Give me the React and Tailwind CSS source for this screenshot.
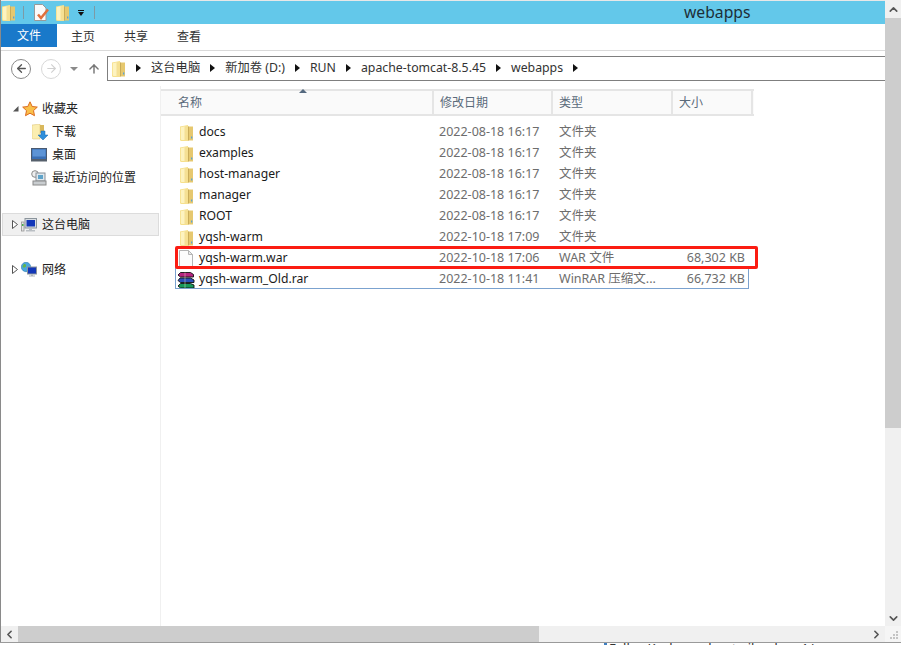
import React from 'react';
import { ArrowLeft, ArrowRight, ArrowUp, ChevronUp, ChevronDown, ChevronLeft, ChevronRight } from 'lucide-react';

const FONT = '"Noto Sans", "Noto Sans CJK SC", sans-serif';

// open manila folder, same drawing at every size
const Folder = ({ w = 13, h = 16 }) => (
  <svg width={w} height={h} viewBox="0 0 13 16" className="shrink-0">
    <path d="M0 1.500 8 0v16H1.500Q0 16 0 14.500z" fill="#f6e08c" />
    <path d="M.8 2.200 6 1v14H1.800Q.8 15 .8 14z" fill="#fdf3c0" />
    <path d="M4.500 1.300 7.500.8V15.500H4.500z" fill="#f5e094" />
    <path d="M8 1.500h5V15.500H8z" fill="#e6c86f" />
    <path d="M8 1.500h.8V15.500H8z" fill="#c2a555" />
    <path d="M11 11.500h1.300v2H11z" fill="#5aa3d8" />
  </svg>
);

const PlainFile = () => (
  <svg width="14" height="17" viewBox="0 0 14 17" className="shrink-0">
    <path d="M.5.500h9l4 4v12H.5z" fill="#fcfcfc" stroke="#b5b5b5" />
    <path d="M9.500.500v4h4z" fill="#eaeaea" stroke="#b5b5b5" />
  </svg>
);

const RarIcon = () => (
  <svg width="18" height="18" viewBox="0 0 18 18" className="shrink-0">
    <path d="M3.500 1.500h10L16.500 3.500v2.500h-13L1 4z" fill="#b5237f" stroke="#111" strokeWidth="0.900" />
    <path d="M3 7h10.500L17 9v2.500H3.500L1 9.500z" fill="#2a4fb8" stroke="#111" strokeWidth="0.900" />
    <path d="M3.500 12.500h10L17 14v3H3.500L1 15z" fill="#17985a" stroke="#111" strokeWidth="0.900" />
    <path d="M8 1.500v15.500" stroke="#e9e2c0" strokeWidth="0.800" opacity="0.600" />
  </svg>
);

const Star = () => (
  <svg width="16" height="16" viewBox="0 0 16 16" className="shrink-0">
    <path d="M8 .8l2.200 4.700 5.100.6-3.800 3.500 1 5.100L8 12.200l-4.500 2.500 1-5.100L.7 6.100l5.100-.6z" fill="#f9c04a" stroke="#dd6a1f" strokeWidth="1" />
  </svg>
);

const DownloadFolder = () => (
  <svg width="16" height="16" viewBox="0 0 16 16" className="shrink-0">
    <path d="M0 1 8 0v15H1.500Q0 15 0 13.500z" fill="#fbeeb0" stroke="#d8bf73" strokeWidth="0.500" />
    <path d="M8 1h4v8H8z" fill="#d9b85c" />
    <path d="M9 7h4v4h3l-5 5-5-5h3z" fill="#2f8fdc" stroke="#1b6bb0" strokeWidth="0.500" />
  </svg>
);

const Desktop = () => (
  <svg width="16" height="14" viewBox="0 0 16 14" className="shrink-0">
    <rect x="0.500" y="0.500" width="15" height="11" fill="#3a6fb5" stroke="#4a5a70" />
    <rect x="1.500" y="1.500" width="13" height="7" fill="#5d94d6" />
    <rect x="0" y="11" width="16" height="2.500" fill="#56606c" />
  </svg>
);

const Recent = () => (
  <svg width="16" height="16" viewBox="0 0 16 16" className="shrink-0">
    <circle cx="4" cy="4" r="3.300" fill="#eee" stroke="#8a8a8a" />
    <rect x="5" y="3" width="9" height="8" fill="#dfe8ee" stroke="#8a9097" />
    <rect x="7" y="5" width="5" height="4" fill="#5fa3c9" />
    <rect x="2" y="11" width="13" height="4" fill="#c9cdd0" stroke="#8a8a8a" />
  </svg>
);

const Computer = () => (
  <svg width="16" height="14" viewBox="0 0 16 14" className="shrink-0">
    <rect x="0.500" y="4" width="2.500" height="9" fill="#e7e7e7" stroke="#8b8b8b" strokeWidth="0.700" />
    <rect x="1" y="6" width="1.500" height="2" fill="#48b04a" />
    <rect x="4" y="0.500" width="11.500" height="9.500" fill="#d8dde2" stroke="#8b949c" />
    <rect x="5.500" y="2" width="8.500" height="6.500" fill="#1236b8" />
    <path d="M8 10.500h3v1.500h3v1.500H5V12h3z" fill="#b9bec3" />
  </svg>
);

const Network = () => (
  <svg width="16" height="15" viewBox="0 0 16 15" className="shrink-0">
    <circle cx="5" cy="5" r="4.700" fill="#4aa7dd" stroke="#2b7bb0" strokeWidth="0.600" />
    <path d="M2.500 2.500c2-1 2.500 0 2.500 1.500S2.500 6 1.500 5zM6.500 5c1.500 0 1.500 1.500 1 3-1.500 0-1.500-1.500-1-3z" fill="#62b648" />
    <rect x="6.500" y="5" width="9" height="7" fill="#1236b8" stroke="#8b949c" />
    <path d="M10 12.500h2v1h2v1H8v-1h2z" fill="#aeb4b9" />
  </svg>
);

const QuickCheck = () => (
  <svg width="16" height="17" viewBox="0 0 16 17" className="shrink-0">
    <path d="M.5.500h8l3.500 3.500v12.500H.5z" fill="#fafafa" stroke="#999" />
    <path d="M4 10.500l3 3.500 7-8.500" fill="none" stroke="#e0703c" strokeWidth="2.500" />
  </svg>
);

const Caret = ({ open }) =>
  open ? (
    <svg width="7" height="7" viewBox="0 0 7 7" className="shrink-0"><path d="M6.500 1v5.500H1z" fill="#555" /></svg>
  ) : (
    <svg width="6" height="9" viewBox="0 0 6 9" className="shrink-0"><path d="M.5.500 5.500 4.500.5 8.500z" fill="#fff" stroke="#555" /></svg>
  );

const Crumb = ({ children }) => (
  <>
    <svg width="5" height="8" viewBox="0 0 5 8" className="shrink-0"><path d="M0 0l5 4-5 4z" fill="#111" /></svg>
    {children && <span className="text-[12.3px] leading-none text-[#333]">{children}</span>}
  </>
);

const rows = [
  { name: 'docs', date: '2022-08-18 16:17', type: '文件夹', size: '' },
  { name: 'examples', date: '2022-08-18 16:17', type: '文件夹', size: '' },
  { name: 'host-manager', date: '2022-08-18 16:17', type: '文件夹', size: '' },
  { name: 'manager', date: '2022-08-18 16:17', type: '文件夹', size: '' },
  { name: 'ROOT', date: '2022-08-18 16:17', type: '文件夹', size: '' },
  { name: 'yqsh-warm', date: '2022-10-18 17:09', type: '文件夹', size: '' },
  { name: 'yqsh-warm.war', date: '2022-10-18 17:06', type: 'WAR 文件', size: '68,302 KB', icon: <PlainFile /> },
  { name: 'yqsh-warm_Old.rar', date: '2022-10-18 11:41', type: 'WinRAR 压缩文...', size: '66,732 KB', icon: <RarIcon /> },
];

const Row = ({ row }) => (
  <div className="flex h-[21px] w-[583px] items-center text-[12.5px] leading-none text-[#6d6d6d]">
    <div className="flex w-[272px] items-center gap-[4px] pl-[15px]">
      <span className="flex w-[18px] justify-center">{row.icon || <Folder />}</span>
      <span className="text-[12.2px] text-[#1a1a1a]">{row.name}</span>
    </div>
    <div className="w-[120px] pl-[5px]">{row.date}</div>
    <div className="w-[108px] pl-[5px]">{row.type}</div>
    <div className="w-[83px] text-right">{row.size}</div>
  </div>
);

const HeaderCell = ({ w, children }) => (
  <div className="flex h-full items-center border-r-2 border-[#e5e5e5] pl-[6px] text-[12px] text-[#5a6a7a]" style={{ width: w }}>
    {children}
  </div>
);

export default function App() {
  return (
    <div className="relative h-[645px] w-[901px] overflow-hidden bg-white" style={{ fontFamily: FONT }}>
      <div className="flex h-[642px] border-l border-[#8a8a8a]">
        <div className="flex min-w-0 flex-1 flex-col">
          {/* title bar */}
          <div className="flex h-[24px] shrink-0 items-center border-t border-[#e8e8e8] bg-[#63c8ea]">
            <div className="ml-[1px]"><Folder /></div>
            <div className="ml-[8px] h-[13px] w-px bg-[#7d9aa5]" />
            <div className="ml-[10px]"><QuickCheck /></div>
            <div className="ml-[6px]"><Folder /></div>
            <div className="ml-[9px] flex flex-col items-center">
              <div className="h-[1px] w-[6px] bg-[#111]" />
              <div className="mt-[1px] h-0 w-0 border-x-[3px] border-t-[4px] border-x-transparent border-t-[#111]" />
            </div>
            <div className="ml-[10px] h-[13px] w-px bg-[#7d9aa5]" />
            <div className="ml-[589px] text-[15.7px] leading-none text-[#1d2f38]">webapps</div>
          </div>

          {/* ribbon tabs */}
          <div className="flex h-[26px] shrink-0 items-start text-[12px] text-[#333]">
            <div className="flex h-[23px] w-[56px] items-center justify-center bg-[#1979ca] text-white">文件</div>
            <div className="flex h-[26px] w-[52px] items-center justify-center">主页</div>
            <div className="flex h-[26px] w-[54px] items-center justify-center">共享</div>
            <div className="flex h-[26px] w-[52px] items-center justify-center">查看</div>
          </div>

          {/* address row */}
          <div className="flex h-[36px] shrink-0 items-center border-t border-[#dadada]">
            <div className="ml-[10px] flex h-[20px] w-[20px] items-center justify-center rounded-full border border-[#8a8a8a]">
              <ArrowLeft size={13} strokeWidth={2.500} color="#555" />
            </div>
            <div className="ml-[10px] flex h-[20px] w-[20px] items-center justify-center rounded-full border border-[#d8d8d8]">
              <ArrowRight size={13} strokeWidth={2} color="#d0d0d0" />
            </div>
            <div className="ml-[9px] h-0 w-0 border-x-[4px] border-t-[4px] border-x-transparent border-t-[#8a8a8a]" />
            <ArrowUp size={14} strokeWidth={2.500} color="#777" className="ml-[9px]" />
            <div className="ml-[6px] flex h-[25px] min-w-0 flex-1 items-center gap-[8px] border-y border-l border-[#7f7f7f] pl-[4px]">
              <Folder />
              <span className="ml-[3px] flex items-center gap-[10px]">
                <Crumb>这台电脑</Crumb>
                <Crumb>新加卷 (D:)</Crumb>
                <Crumb>RUN</Crumb>
                <Crumb>apache-tomcat-8.5.45</Crumb>
                <Crumb>webapps</Crumb>
                <Crumb />
              </span>
            </div>
          </div>

          <div className="flex min-h-0 flex-1">
            {/* nav pane */}
            <div className="flex w-[159px] shrink-0 flex-col text-[12px] text-[#222]">
              <div className="mt-[11px] flex h-[23px] items-center pl-[11px]">
                <Caret open />
                <span className="ml-[3px]"><Star /></span>
                <span className="ml-[4px]">收藏夹</span>
              </div>
              <div className="flex h-[23px] items-center pl-[31px]"><DownloadFolder /><span className="ml-[4px]">下载</span></div>
              <div className="flex h-[23px] items-center pl-[30px]"><Desktop /><span className="ml-[5px]">桌面</span></div>
              <div className="flex h-[23px] items-center pl-[30px]"><Recent /><span className="ml-[5px]">最近访问的位置</span></div>
              <div className="mt-[24px] ml-[1px] flex h-[23px] w-[157px] items-center border border-[#dcdcdc] bg-[#f0f0f0] pl-[9px]">
                <Caret />
                <span className="ml-[3px]"><Computer /></span>
                <span className="ml-[5px]">这台电脑</span>
              </div>
              <div className="mt-[22px] flex h-[23px] items-center pl-[11px]">
                <Caret />
                <span className="ml-[3px]"><Network /></span>
                <span className="ml-[5px]">网络</span>
              </div>
            </div>

            {/* file list */}
            <div className="relative min-w-0 flex-1 border-l border-[#f0f0f0]">
              <div className="mt-[3px] flex h-[27px] w-[593px] items-center border-y-2 border-[#e5e5e5] bg-[#fafafa]">
                <div className="w-[11px]" />
                <HeaderCell w={262}>名称</HeaderCell>
                <HeaderCell w={119}>修改日期</HeaderCell>
                <HeaderCell w={120}>类型</HeaderCell>
                <HeaderCell w={80}>大小</HeaderCell>
              </div>
              <div className="absolute left-[138px] top-[3px] h-0 w-0 border-x-[4px] border-b-[4px] border-x-transparent border-b-[#54697f]" />
              <div className="mt-[6px] flex flex-col pl-[1px]">
                {rows.map((r) => <Row key={r.name} row={r} />)}
              </div>
              {/* selection outline on the last row, red box drawn over the list */}
              <div className="absolute left-[14px] top-[181px] h-[22px] w-[574px] border-x border-b border-[#7ba2cf]" />
              <div className="absolute left-[14px] top-[160px] h-[23px] w-[583px] rounded-[2px] border-[3px] border-[#fb1c12]" />
            </div>
          </div>

          {/* horizontal scrollbar */}
          <div className="flex h-[16px] shrink-0 items-center bg-[#cdcdcd]">
            <div className="flex h-full w-[17px] items-center justify-center bg-[#f0f0f0]">
              <ChevronLeft size={13} strokeWidth={3} color="#555" />
            </div>
            <div className="h-full w-[521px]" />
            <div className="flex h-full flex-1 items-center justify-end bg-[#f0f0f0] pr-[2px]">
              <ChevronRight size={13} strokeWidth={3} color="#555" />
            </div>
          </div>
        </div>

        {/* vertical scrollbar */}
        <div className="flex w-[16px] shrink-0 flex-col bg-[#f0f0f0]">
          <div className="flex h-[18px] items-center justify-center"><ChevronUp size={13} strokeWidth={3} color="#555" /></div>
          <div className="h-[410px] bg-[#cdcdcd]" />
          <div className="flex-1" />
          <div className="flex h-[16px] items-center justify-center"><ChevronDown size={13} strokeWidth={3} color="#555" /></div>
          <div className="flex h-[16px] items-end justify-end bg-[#f5f5f5] pb-[3px] pr-[3px]">
            <svg width="8" height="8" viewBox="0 0 8 8"><path d="M6 0h2v2H6zM3 3h2v2H3zM6 3h2v2H6zM0 6h2v2H0zM3 6h2v2H3zM6 6h2v2H6z" fill="#c4c4c4" /></svg>
          </div>
        </div>
      </div>

      {/* window behind, only its top edge shows */}
      <div className="flex h-[3px] overflow-hidden border-t border-[#9a9a9a] bg-white pl-[604px]">
        <div className="h-[3px] w-[3px] shrink-0 bg-[#3f7fc0]" />
        <div className="-mt-[2px] ml-[2px] whitespace-nowrap text-[13px] leading-[14px] text-[#333]">FellowKeshanoohent oilendnu=1/u</div>
      </div>
    </div>
  );
}
